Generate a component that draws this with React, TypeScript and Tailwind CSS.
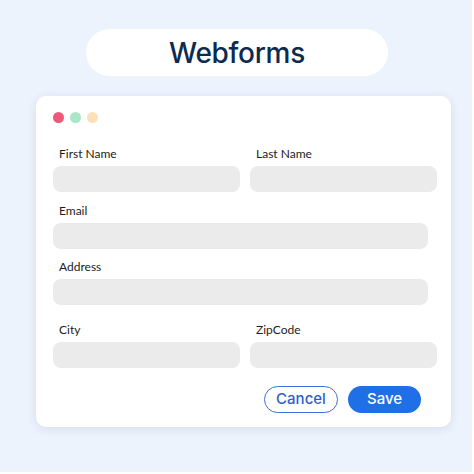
import React from "react"

function Field({ label, className = "" }: { label: string; className?: string }) {
  return (
    <div className={className}>
      <div className="pl-[6px] text-[12px] leading-4 text-[#1c1c1c] font-['Lato',sans-serif]">
        {label}
      </div>
      <div className="mt-1 h-[26px] rounded-[8px] bg-[#ebebeb]" />
    </div>
  )
}

export default function App() {
  return (
    <div className="w-[474px] h-[474px] bg-[#edf3fd] border-r-2 border-b-2 border-white flex flex-col items-start">
      {/* Title pill */}
      <div className="ml-[86px] mt-[29px] w-[302px] h-[47px] rounded-full bg-white flex items-center justify-center">
        <span className="text-[28px] font-medium text-[#0e2a4f] tracking-[-0.3px] font-['Inter',sans-serif] leading-none">
          Webforms
        </span>
      </div>

      {/* Form window */}
      <div className="ml-[36px] mt-[20px] w-[415px] h-[331px] rounded-[10px] bg-white shadow-[0_2px_10px_rgba(40,60,110,0.12)] pl-[17px] pr-[14px]">
        <div className="flex gap-[6px] mt-[16px]">
          <span className="w-[11px] h-[11px] rounded-full bg-[#f0587a]" />
          <span className="w-[11px] h-[11px] rounded-full bg-[#a9e5c6]" />
          <span className="w-[11px] h-[11px] rounded-full bg-[#fde0b9]" />
        </div>

        <div className="grid grid-cols-2 gap-x-[10px] mt-[23px]">
          <Field label="First Name" />
          <Field label="Last Name" />
        </div>

        <Field label="Email" className="mt-[11px] mr-[9px]" />
        <Field label="Address" className="mt-[10px] mr-[9px]" />

        <div className="grid grid-cols-2 gap-x-[10px] mt-[17px]">
          <Field label="City" />
          <Field label="ZipCode" />
        </div>

        <div className="flex justify-end gap-[10px] mt-[18px] mr-[16px] font-['Inter',sans-serif] font-medium text-[15px]">
          <button className="w-[74px] h-[27px] rounded-full border border-[#3d6fd6] bg-white text-[#2c5fc9]">
            Cancel
          </button>
          <button className="w-[73px] h-[27px] rounded-full bg-[#1f6fe6] text-white">
            Save
          </button>
        </div>
      </div>
    </div>
  )
}
